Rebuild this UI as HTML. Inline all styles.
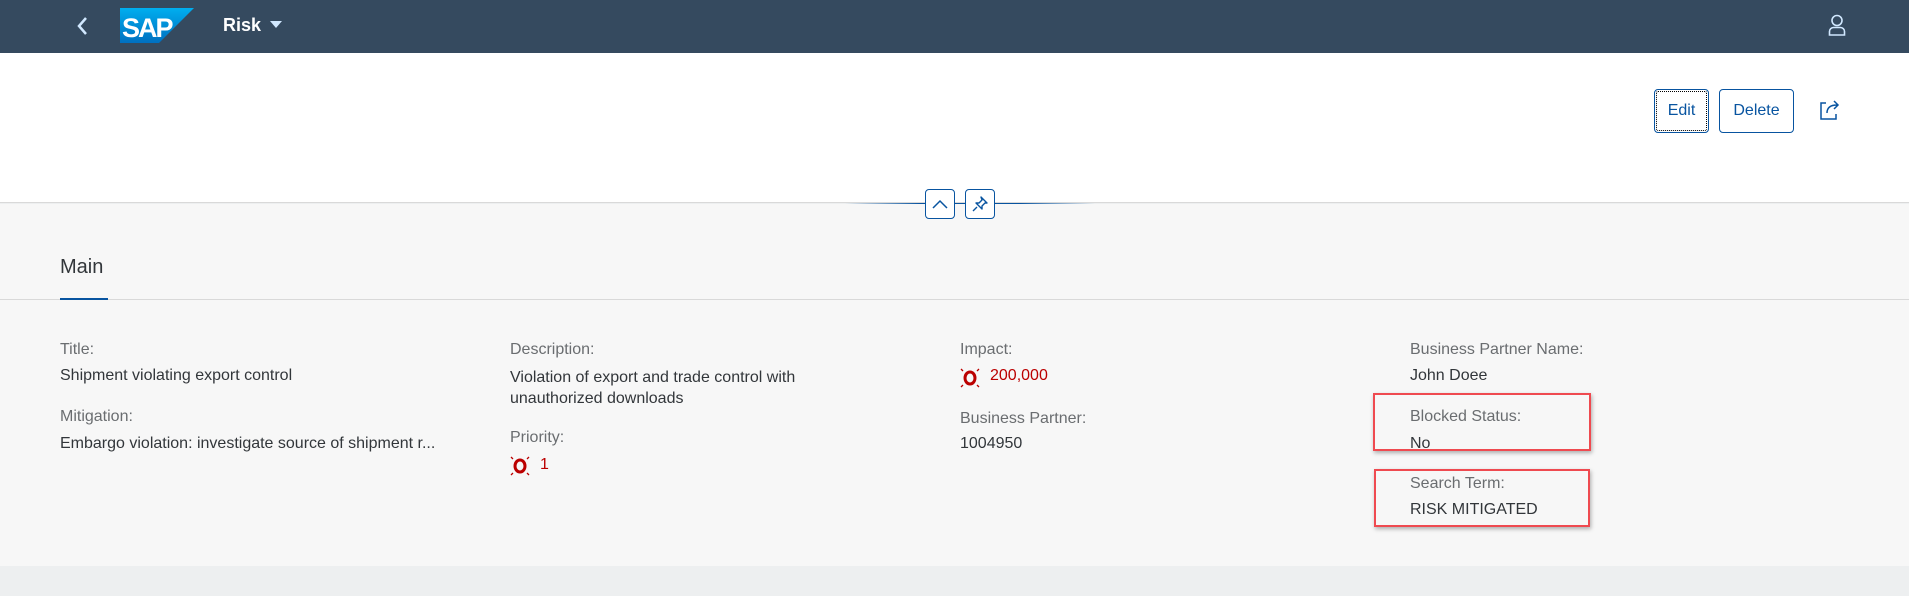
<!DOCTYPE html>
<html><head><meta charset="utf-8"><style>
*{margin:0;padding:0;box-sizing:border-box}
body{width:1909px;height:596px;overflow:hidden;background:#edeff0;font-family:"Liberation Sans",Arial,sans-serif;position:relative}
.a{position:absolute;white-space:nowrap}
.hdr{position:absolute;left:0;top:0;width:1909px;height:53px;background:#354a5f}
.white{position:absolute;left:0;top:53px;width:1909px;height:150px;background:#fff;border-bottom:1px solid #d9d9d9}
.gray{position:absolute;left:0;top:204px;width:1909px;height:362px;background:#f7f7f7}
.lbl{color:#6a6d70;font-size:16px}
.val{color:#32363a;font-size:16px}
.red{color:#bb0000;font-size:16px}
.btn{position:absolute;border:1px solid #0854a0;border-radius:4px;color:#0854a0;font-size:16px;display:flex;align-items:center;justify-content:center;background:#fff}
.box{position:absolute;border:2px solid #ef4a50;box-shadow:1px 2px 4px rgba(0,0,0,.3)}
</style></head><body>
<div class="hdr"></div>
<svg class="a" style="left:76px;top:15px" width="14" height="22" viewBox="0 0 14 22"><path d="M10 3L3 11l7 8" stroke="#d1e8ff" stroke-width="2.5" fill="none"/></svg>
<svg class="a" style="left:120px;top:8px" width="74" height="35" viewBox="0 0 74 35"><defs><linearGradient id="g" x1="0" y1="0" x2="0" y2="1"><stop offset="0" stop-color="#00aeef"/><stop offset="1" stop-color="#0070c0"/></linearGradient></defs><path d="M0 0H74L39 35H0Z" fill="url(#g)"/><text x="2" y="29" font-family="Liberation Sans" font-weight="bold" font-size="27" fill="#fff" letter-spacing="-2">SAP</text></svg>
<div class="a" style="left:223px;top:15px;color:#fff;font-weight:bold;font-size:18px">Risk</div>
<svg class="a" style="left:270px;top:21px" width="12" height="8"><path d="M0 0h12L6 7z" fill="#d1e8ff"/></svg>
<svg class="a" style="left:1828px;top:14px" width="18" height="22" viewBox="0 0 18 22"><circle cx="9" cy="6.5" r="5" fill="none" stroke="#d1e8ff" stroke-width="1.6"/><path d="M1.5 21v-3.5a4 4 0 0 1 4-4h7a4 4 0 0 1 4 4V21z" fill="none" stroke="#d1e8ff" stroke-width="1.6"/></svg>
<div class="white"></div>
<div class="btn" style="left:1654px;top:89px;width:55px;height:44px;outline:1px dotted #000;outline-offset:-3px">Edit</div>
<div class="btn" style="left:1719px;top:89px;width:75px;height:44px">Delete</div>
<svg class="a" style="left:1819px;top:99px" width="22" height="22" viewBox="0 0 22 22"><path d="M7 4H2v16h15v-5" fill="none" stroke="#0854a0" stroke-width="1.5"/><path d="M8 14c0-6 4-8 10-8M15 2l4 4-4 4" fill="none" stroke="#0854a0" stroke-width="1.5"/></svg>
<div class="gray"></div>
<div class="a" style="left:845px;top:203px;width:250px;height:1px;background:linear-gradient(90deg,rgba(8,84,160,0),#0854a0 30%,#0854a0 70%,rgba(8,84,160,0))"></div>
<div class="btn" style="left:925px;top:189px;width:30px;height:30px"><svg width="16" height="10"><path d="M1 9l7-7 7 7" stroke="#0854a0" stroke-width="1.5" fill="none"/></svg></div>
<div class="btn" style="left:965px;top:189px;width:30px;height:30px"><svg width="18" height="18" viewBox="0 0 18 18"><path d="M10 2l6 6-2 0-3 3 0 3-6-6 3 0 3-3z M6 12l-4 4" stroke="#0854a0" stroke-width="1.4" fill="none" stroke-linejoin="round"/></svg></div>
<div class="a" style="left:60px;top:256px;font-size:20px;color:#32363a">Main</div>
<div class="a" style="left:0;top:299px;width:1909px;height:1px;background:#d9d9d9"></div>
<div class="a" style="left:60px;top:298px;width:48px;height:2px;background:#0854a0"></div>

<div class="a lbl" style="left:60px;top:341px">Title:</div>
<div class="a val" style="left:60px;top:367px">Shipment violating export control</div>
<div class="a lbl" style="left:60px;top:408px">Mitigation:</div>
<div class="a val" style="left:60px;top:435px">Embargo violation: investigate source of shipment r...</div>

<div class="a lbl" style="left:510px;top:341px">Description:</div>
<div class="a val" style="left:510px;top:367px;line-height:21px">Violation of export and trade control with<br>unauthorized downloads</div>
<div class="a lbl" style="left:510px;top:429px">Priority:</div>
<svg class="a" style="left:510px;top:456px" width="20" height="20" viewBox="0 0 20 20"><ellipse cx="10" cy="10" rx="5" ry="6" fill="none" stroke="#bb0000" stroke-width="3"/><path d="M1 1l2 2M19 1l-2 2M1 19l2-2M19 19l-2-2" stroke="#bb0000" stroke-width="1.3"/></svg>
<div class="a red" style="left:540px;top:456px">1</div>

<div class="a lbl" style="left:960px;top:341px">Impact:</div>
<svg class="a" style="left:960px;top:368px" width="20" height="20" viewBox="0 0 20 20"><ellipse cx="10" cy="10" rx="5" ry="6" fill="none" stroke="#bb0000" stroke-width="3"/><path d="M1 1l2 2M19 1l-2 2M1 19l2-2M19 19l-2-2" stroke="#bb0000" stroke-width="1.3"/></svg>
<div class="a red" style="left:990px;top:367px">200,000</div>
<div class="a lbl" style="left:960px;top:410px">Business Partner:</div>
<div class="a val" style="left:960px;top:435px">1004950</div>

<div class="a lbl" style="left:1410px;top:341px">Business Partner Name:</div>
<div class="a val" style="left:1410px;top:367px">John Doee</div>
<div class="a lbl" style="left:1410px;top:408px">Blocked Status:</div>
<div class="a val" style="left:1410px;top:435px">No</div>
<div class="a lbl" style="left:1410px;top:475px">Search Term:</div>
<div class="a val" style="left:1410px;top:501px">RISK MITIGATED</div>
<div class="box" style="left:1373px;top:393px;width:218px;height:58px"></div>
<div class="box" style="left:1374px;top:469px;width:216px;height:58px"></div>
</body></html>
